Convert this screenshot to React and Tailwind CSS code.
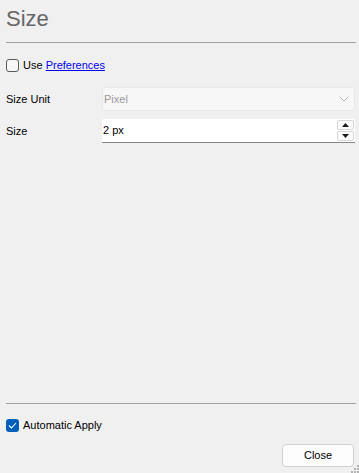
import React, { useState } from "react";

const font = { fontFamily: '"Segoe UI", "Liberation Sans", Arial, sans-serif' };

const Grip = () => (
  <svg width="9" height="9" viewBox="0 0 9 9" className="absolute right-0 bottom-0">
    {[[7, 1], [4, 4], [7, 4], [1, 7], [4, 7], [7, 7]].map(([x, y], i) => (
      <rect key={i} x={x} y={y} width="2" height="2" fill="#b4b4b4" />
    ))}
  </svg>
);

export default function App() {
  const [usePrefs, setUsePrefs] = useState(false);
  const [autoApply, setAutoApply] = useState(true);

  return (
    <div
      className="relative w-[359px] h-[473px] bg-[#f0f0f0] text-[11px] text-black flex flex-col px-[6px] overflow-hidden"
      style={font}
    >
      <h1 className="text-[22px] leading-none text-[#666666] pt-[8px] h-[42px]">Size</h1>
      <div className="h-px bg-[#a0a0a0] w-[350px]" />

      {/* use preferences */}
      <label className="flex items-center gap-[4px] mt-[15px] h-[14px]">
        <span
          onClick={() => setUsePrefs(!usePrefs)}
          className="w-[13px] h-[13px] rounded-[3px] border border-[#5a5a5a] bg-[#f7f7f7]"
        />
        <span>
          Use <a href="#" className="text-[#0000ee] underline">Preferences</a>
        </span>
      </label>

      {/* rows */}
      <div className="grid grid-cols-[96px_253px] gap-y-[8px] mt-[15px] items-center">
        <span>Size Unit</span>
        <div className="h-[24px] bg-[#f7f7f7] border border-[#e8e8e8] rounded-[3px] flex items-center justify-between pl-[1px] pr-[5px] text-[#9a9a9a]">
          <span>Pixel</span>
          <svg width="10" height="6" viewBox="0 0 10 6">
            <path d="M0.5 0.5 L5 5 L9.5 0.5" fill="none" stroke="#b5b5b5" strokeWidth="1" />
          </svg>
        </div>

        <span>Size</span>
        <div className="h-[24px] bg-white border-b border-[#868686] rounded-t-[2px] flex items-center justify-between pl-[1px] pr-[1px]">
          <span>2 px</span>
          <div className="flex flex-col gap-px">
            <button className="w-[17px] h-[10px] bg-[#fbfbfb] border border-[#d6d6d6] rounded-[2px] flex items-center justify-center">
              <svg width="7" height="4" viewBox="0 0 7 4"><path d="M3.5 0 L7 4 L0 4 Z" fill="#1a1a1a" /></svg>
            </button>
            <button className="w-[17px] h-[10px] bg-[#fbfbfb] border border-[#d6d6d6] rounded-[2px] flex items-center justify-center">
              <svg width="7" height="4" viewBox="0 0 7 4"><path d="M0 0 L7 0 L3.5 4 Z" fill="#1a1a1a" /></svg>
            </button>
          </div>
        </div>
      </div>

      <div className="flex-1" />

      <div className="h-px bg-[#a0a0a0] w-[350px]" />
      <label className="flex items-center gap-[4px] mt-[14px] h-[14px]">
        <span
          onClick={() => setAutoApply(!autoApply)}
          className={`w-[13px] h-[13px] rounded-[3px] flex items-center justify-center ${autoApply ? "bg-[#005fb8]" : "border border-[#5a5a5a]"}`}
        >
          {autoApply && (
            <svg width="9" height="7" viewBox="0 0 9 7">
              <path d="M1 3.5 L3.5 6 L8 1" fill="none" stroke="white" strokeWidth="1.1" />
            </svg>
          )}
        </span>
        <span>Automatic Apply</span>
      </label>

      <div className="flex justify-end mt-[12px] mb-[6px]">
        <button className="w-[72px] h-[23px] bg-[#fdfdfd] border border-[#d0d0d0] rounded-[4px] text-[11px] mr-[-1px]">
          Close
        </button>
      </div>
      <Grip />
    </div>
  );
}
